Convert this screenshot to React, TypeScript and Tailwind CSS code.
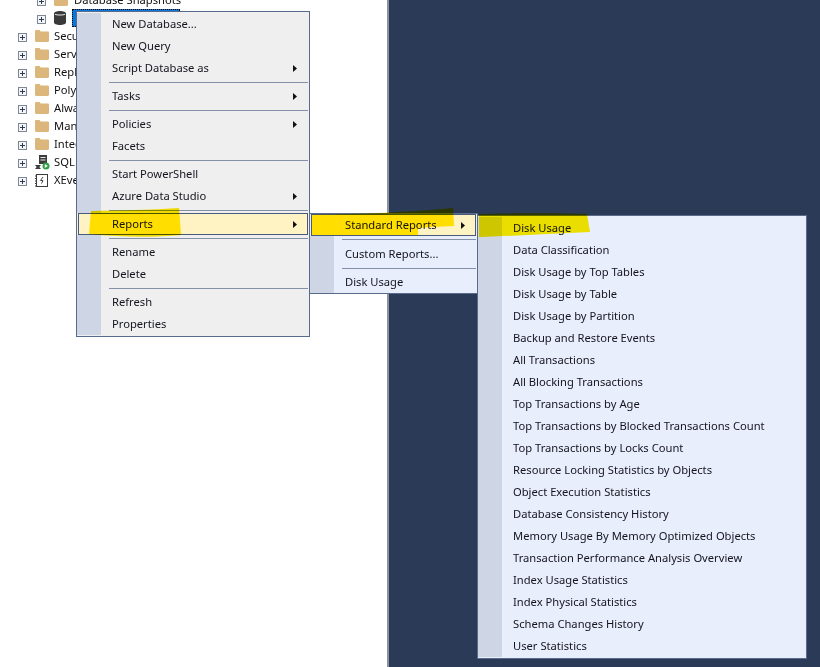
const font = { fontFamily: '"Noto Sans", "Open Sans", sans-serif' };

function Expander() {
  return (
    <svg width="9" height="9" viewBox="0 0 9 9" className="shrink-0">
      <rect x="0.5" y="0.5" width="8" height="8" fill="#f4f5f7" stroke="#7f8794" />
      <path d="M2 4.5h5M4.5 2v5" stroke="#2d3b55" />
    </svg>
  );
}

function Folder() {
  return (
    <svg width="14" height="12" viewBox="0 0 14 12" className="shrink-0">
      <path d="M0 2V1.2C0 .5.5 0 1.2 0h3.3l1.2 1.500h7.100c.7 0 1.200.5 1.200 1.200v8.100c0 .7-.5 1.200-1.200 1.200H1.200C.5 12 0 11.500 0 10.800z" fill="#dcb67a" />
    </svg>
  );
}

function Database() {
  return (
    <svg width="12" height="14" viewBox="0 0 12 14" className="shrink-0">
      <path d="M0 2.500C0 1 2.700 0 6 0s6 1 6 2.500v9C12 13 9.300 14 6 14s-6-1-6-2.500z" fill="#3a3a3a" />
      <path d="M1 3.300C2.500 4.300 9.500 4.300 11 3.300" fill="none" stroke="#e8e8e8" />
    </svg>
  );
}

function AgentIcon() {
  return (
    <svg width="15" height="15" viewBox="0 0 15 15" className="shrink-0">
      <rect x="4" y="0" width="8" height="9" fill="#3c3c3c" />
      <path d="M5.500 2.500h5M5.500 5h5" stroke="#e8e8e8" />
      <path d="M0 10h6L4.300 12 6 14H0l1.700-2z" fill="#3c3c3c" />
      <circle cx="11" cy="11" r="3.500" fill="#2f9e44" />
      <path d="M9.800 9.100v3.800l3-1.900z" fill="#fff" />
    </svg>
  );
}

function XEventIcon() {
  return (
    <svg width="13" height="13" viewBox="0 0 13 13" className="shrink-0">
      <rect x="1.500" y="0.500" width="11" height="12" fill="#fff" stroke="#3c3c3c" />
      <path d="M0 2h2M0 4.500h2M0 7h2M0 9.500h2M0 12h2" stroke="#3c3c3c" />
      <path d="M8 3 5.500 6.500h2.500l-1.500 3" fill="none" stroke="#444" />
    </svg>
  );
}

function TreeRow({ label, icon, sub }: { label: string; icon: React.ReactNode; sub?: boolean }) {
  return (
    <div className={`flex h-[18px] items-center whitespace-nowrap ${sub ? 'pl-[37px]' : 'pl-[18px]'}`}>
      <Expander />
      <div className="w-[8px] shrink-0" />
      <div className={`mb-[2px] flex shrink-0 ${sub ? 'w-[20px]' : 'w-[19px]'}`}>{icon}</div>
      <span className="mb-px text-[11.2px] text-[#111]">{label}</span>
    </div>
  );
}

function Arrow({ className }: { className?: string }) {
  return (
    <svg width="4" height="7" viewBox="0 0 4 7" className={className}>
      <path d="M0 0l4 3.500L0 7z" fill="#111" />
    </svg>
  );
}

function Item({ label, arrow }: { label: string; arrow?: boolean }) {
  return (
    <div className="flex h-[22px] items-center">
      <div className="h-full w-[24px] shrink-0 bg-[#ced5e5]" />
      <span className="flex-1 pl-[11px]">{label}</span>
      {arrow && <Arrow className="mr-[12px]" />}
    </div>
  );
}

function Sep({ height = 'h-[6px]' }: { height?: string }) {
  return (
    <div className={`flex ${height}`}>
      <div className="h-full w-[24px] shrink-0 bg-[#ced5e5]" />
      <div className="flex flex-1 items-center pl-[8px] pr-px">
        <div className="h-px w-full bg-[#8390a8]" />
      </div>
    </div>
  );
}

function ActiveItem({ label }: { label: string }) {
  return (
    <div className="mx-px flex h-[22px] items-center border border-[#4a5a7a] bg-[#fff3c4]">
      <span className="flex-1 pl-[33px]">{label}</span>
      <Arrow className="mr-[10px]" />
    </div>
  );
}

const standardReports = [
  'Disk Usage',
  'Data Classification',
  'Disk Usage by Top Tables',
  'Disk Usage by Table',
  'Disk Usage by Partition',
  'Backup and Restore Events',
  'All Transactions',
  'All Blocking Transactions',
  'Top Transactions by Age',
  'Top Transactions by Blocked Transactions Count',
  'Top Transactions by Locks Count',
  'Resource Locking Statistics by Objects',
  'Object Execution Statistics',
  'Database Consistency History',
  'Memory Usage By Memory Optimized Objects',
  'Transaction Performance Analysis Overview',
  'Index Usage Statistics',
  'Index Physical Statistics',
  'Schema Changes History',
  'User Statistics',
];

const menuText = 'text-[11.2px] text-[#14141e] whitespace-nowrap';

export default function App() {
  return (
    <div className="relative flex h-[667px] w-[820px] overflow-hidden bg-white" style={font}>
      <div className="w-[387px] shrink-0 bg-white">
        <div className="mt-[-8px]">
          <TreeRow sub label="Database Snapshots" icon={<Folder />} />
          <TreeRow sub label="" icon={<Database />} />
          {['Security', 'Server Objects', 'Replication', 'PolyBase', 'Always On', 'Management', 'Integration'].map((t) => (
            <TreeRow key={t} label={t} icon={<Folder />} />
          ))}
          <TreeRow label="SQL Server Agent" icon={<AgentIcon />} />
          <TreeRow label="XEvent Profiler" icon={<XEventIcon />} />
        </div>
      </div>
      <div className="w-[2px] shrink-0 bg-[#8c93a0]" />
      <div className="flex-1 bg-[#2a3a57]" />

      {/* selected database row */}
      <div className="absolute left-[72px] top-[9px] h-[18px] w-[108px] border border-dotted border-black bg-[#0a78d7]" />

      {/* main context menu */}
      <div className={`absolute left-[76px] top-[11px] w-[234px] border border-[#5a6a8c] bg-[#efefef] pb-px pt-px ${menuText}`}>
        <Item label="New Database..." />
        <Item label="New Query" />
        <Item label="Script Database as" arrow />
        <Sep />
        <Item label="Tasks" arrow />
        <Sep />
        <Item label="Policies" arrow />
        <Item label="Facets" />
        <Sep />
        <Item label="Start PowerShell" />
        <Item label="Azure Data Studio" arrow />
        <Sep />
        <ActiveItem label="Reports" />
        <Sep />
        <Item label="Rename" />
        <Item label="Delete" />
        <Sep />
        <Item label="Refresh" />
        <Item label="Properties" />
      </div>

      {/* reports submenu */}
      <div className={`absolute left-[309px] top-[213px] w-[169px] border border-[#5a6a8c] bg-[#e9eefc] ${menuText}`}>
        <ActiveItem label="Standard Reports" />
        <Sep height="h-[7px]" />
        <Item label="Custom Reports..." />
        <Sep />
        <Item label="Disk Usage" />
      </div>

      {/* standard reports submenu */}
      <div className={`absolute left-[477px] top-[215px] w-[330px] border border-[#5a6a8c] bg-[#e9eefc] pb-px pt-px ${menuText}`}>
        {standardReports.map((r) => (
          <Item key={r} label={r} />
        ))}
      </div>

      {/* marker scribbles */}
      <svg width="820" height="667" viewBox="0 0 820 667" className="pointer-events-none absolute left-0 top-0 mix-blend-multiply">
        <path d="M91 211 C 120 210 150 210 179 208 L181 235 C 150 238 120 237 89 234z" fill="#ffe900" />
        <path d="M312 215 C 360 214 410 212 453 208 L454 226 C 440 227 425 227 418 228 L418 235 L312 235z" fill="#ffe900" />
        <path d="M479 214 C 510 213 560 213 587 214 L590 232 C 550 234 510 236 479 237z" fill="#ffee00" />
      </svg>
    </div>
  );
}
